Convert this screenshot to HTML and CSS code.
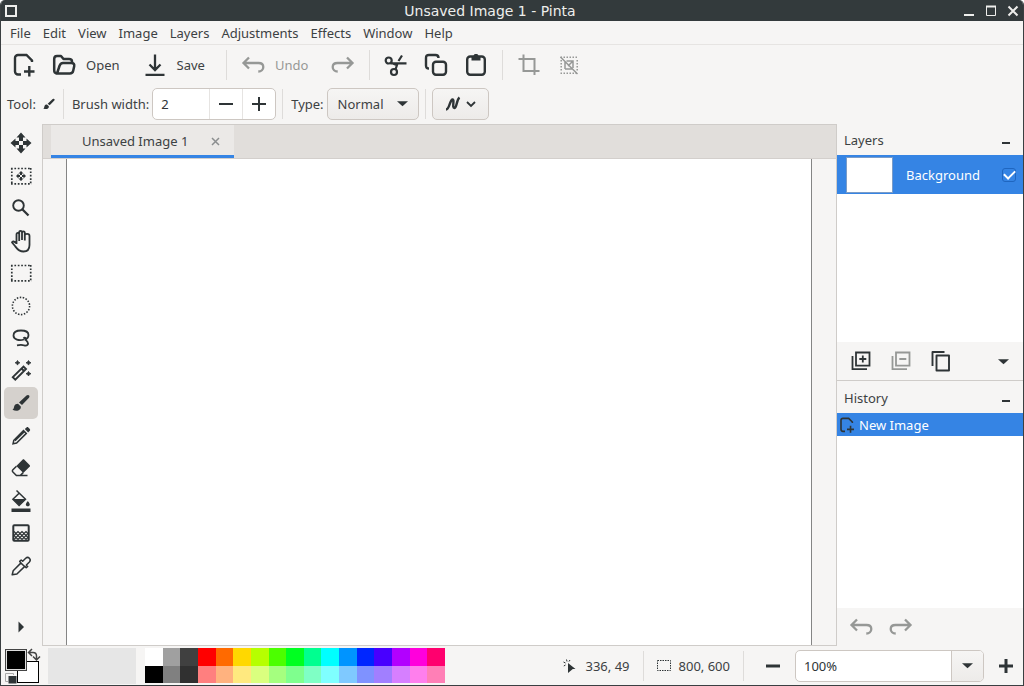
FILE: index.html
```
<!DOCTYPE html>
<html lang="en">
<head>
    <meta charset="utf-8">
    <title>Unsaved Image 1 - Pinta</title>
    <link rel="stylesheet" href="styles.css">
</head>
<body>
    <!-- shared icons -->
    <svg class="defs" aria-hidden="true">
        <symbol id="i-new" viewBox="0 0 24 24"><path d="M9 21.500H6a3 3 0 0 1-3-3V5a3 3 0 0 1 3-3h8.500l5.500 5.500V9M12 18.500h10.500M17.300 13v10.500" fill="none" stroke="currentColor" stroke-width="2.400"/></symbol>
        <symbol id="i-open" viewBox="0 0 24 24"><path d="M4.500 20.500C2.800 20 2.200 19 2.200 17.500V6c0-2 .8-3 2.800-3h4l2.500 3H17c2 0 3 .8 3 2.500V10M5 20.500l2.500-7.500c.6-2 1.500-3 3.500-3h8.500c2.200 0 3.100 1.200 2.700 3.200l-1 4.500c-.4 2-1.400 2.800-3.400 2.800H5z" fill="none" stroke="currentColor" stroke-width="2.500" stroke-linejoin="round"/></symbol>
        <symbol id="i-save" viewBox="0 0 24 24"><path d="M12 1.500V17M6.500 11.500L12 17l5.500-5.500M2.500 21.800h19" fill="none" stroke="currentColor" stroke-width="2.300"/></symbol>
        <symbol id="i-undo" viewBox="0 0 24 24"><path d="M8 4.500L2.500 10 8 15.500M3 10h14.500c3 0 4.800 1.500 4.800 4s-2 4.500-5 4.500" fill="none" stroke="currentColor" stroke-width="2.300"/></symbol>
        <symbol id="i-redo" viewBox="0 0 24 24"><path d="M16 4.500l5.500 5.500-5.500 5.500M21 10H6.500c-3 0-4.800 1.500-4.800 4s2 4.500 5 4.500" fill="none" stroke="currentColor" stroke-width="2.300"/></symbol>
        <symbol id="i-cut" viewBox="0 0 24 24"><g fill="none" stroke="currentColor" stroke-width="2.200"><circle cx="4.700" cy="7.500" r="3"/><circle cx="10" cy="19" r="3"/><path d="M6.500 10.300h16M11.500 16.500l2-6M14.500 8l3.500-5.500M6.500 9.500l6 2.500"/></g></symbol>
        <symbol id="i-copy" viewBox="0 0 24 24"><g fill="none" stroke="currentColor" stroke-width="2.400"><rect x="9" y="8.800" width="13" height="13" rx="3"/><path d="M5 15.500c-2 0-3-1-3-3V5c0-2 1-3 3-3h6.500c2 0 3 1 3 3"/></g></symbol>
        <symbol id="i-paste" viewBox="0 0 24 24"><rect x="3.200" y="3.500" width="17.600" height="18.300" rx="3" fill="none" stroke="currentColor" stroke-width="2.400"/><path d="M7.500 7.500V3.300h2C9.500 1.500 10.500 1 12 1s2.500.5 2.500 2.300h2v4.200z" fill="currentColor"/></symbol>
        <symbol id="i-crop" viewBox="0 0 24 24"><path d="M1.500 6h16v12M6.500 1.500V18h16M17.500 16v6" fill="none" stroke="currentColor" stroke-width="2"/></symbol>
        <symbol id="i-deselect" viewBox="0 0 24 24"><g fill="none" stroke="currentColor" stroke-width="1.500"><path d="M3.500 4.200H21M3.500 20.200H21" stroke-dasharray="1.500 1.500"/><path d="M4.200 7v12M20.200 7v12" stroke-dasharray="1.500 1.500"/><path d="M3.500 4l17 17M8 16V9M8 16h8M9.500 8H16v7M11 13l5-5"/></g></symbol>
        <symbol id="i-move" viewBox="0 0 24 24"><path d="M12 1.500l4.500 5H14V10h-4V6.500H7.500zM12 22.500l4.500-5H14V14h-4v3.500H7.500zM1.500 12l5-4.500V10H10v4H6.500v2.500zM22.500 12l-5-4.500V10H14v4h3.500v2.500z" fill="currentColor"/></symbol>
        <symbol id="i-movesel" viewBox="0 0 24 24"><path d="M2 4.500h20.500M2 19.800h20.500M2.800 4v16M21.700 4v16" fill="none" stroke="currentColor" stroke-width="1.700" stroke-dasharray="1.700 1.700"/><path d="M12 7l2.500 2.500H13V11h-2V9.500H9.500zM12 17l2.500-2.500H13V13h-2v1.500H9.500zM7 12l2.500-2.500V11H11v2H9.500v1.500zM17 12l-2.500-2.500V11H13v2h1.500v1.500z" fill="currentColor"/></symbol>
        <symbol id="i-zoom" viewBox="0 0 24 24"><circle cx="9.500" cy="9.500" r="5.300" fill="none" stroke="currentColor" stroke-width="1.900"/><path d="M13.500 13.500l6 6" stroke="currentColor" stroke-width="2.300"/></symbol>
        <symbol id="i-pan" viewBox="0 0 24 24"><path d="M7.500 15V5.500c0-2.300 2.700-2.300 2.700 0V12M10.200 11V3.500c0-2.300 2.800-2.300 2.800 0V11M13 11V4c0-2.300 2.800-2.300 2.800 0v7.500M15.800 11V6.500c0-2.300 4.700-2.200 4.700.5v9c0 4-1.500 6.500-6 6.500-5 0-7-3.500-8.500-5.500l-3-3.500c0-1.500 2.500-1.500 4.500 1" fill="none" stroke="currentColor" stroke-width="1.800" stroke-linejoin="round"/></symbol>
        <symbol id="i-rect" viewBox="0 0 24 24"><path d="M2 4.500h20.500M2 19.800h20.500M2.800 4v16M21.700 4v16" fill="none" stroke="currentColor" stroke-width="1.700" stroke-dasharray="1.700 1.700"/></symbol>
        <symbol id="i-ellipse" viewBox="0 0 24 24"><circle cx="12" cy="12" r="8.600" fill="none" stroke="currentColor" stroke-width="1.600" stroke-dasharray="1.500 1.500"/></symbol>
        <symbol id="i-lasso" viewBox="0 0 24 24"><path d="M15 13.500C10 15 4.500 13.500 4.500 9.500 4.500 6 8 4.500 12 4.500s7.500 1.500 7.500 4.500c0 2-1.500 4-4 4.800M14.500 12.500c1-1.500 3-.5 2 1l2 2.500c1.500 2.500-.5 4-3 3.500-2-.8-4.500-.8-7.500-.2" fill="none" stroke="currentColor" stroke-width="1.800"/></symbol>
        <symbol id="i-wand" viewBox="0 0 24 24"><path d="M3.800 18.200L14.500 7.500l2.500 2.500L6.300 20.700zM12.500 9.500l2.500 2.500" fill="none" stroke="currentColor" stroke-width="1.900"/><path d="M8.500 1.500l.8 1.500 1.600.8-1.600.8-.8 1.500-.8-1.500-1.600-.8 1.600-.8zM19.500 1.500l.9 1.500 1.600.8-1.600.8-.9 1.500-.9-1.500-1.600-.8 1.600-.8zM19.500 12.500l.9 1.400 1.600.8-1.600.8-.9 1.500-.9-1.500-1.600-.8 1.600-.8z" fill="currentColor" stroke="currentColor" stroke-width=".8"/></symbol>
        <symbol id="i-brush" viewBox="0 0 24 24"><path d="M17.500 4.500c1.800-1.500 4 .3 2.500 2.300L13 14l-3-2.500zM9 12.700l2.800 2.700c.5 3.600-3.800 5.600-8.300 3.300 1.500-.8 1.200-2 1.800-3.700.6-1.600 2-2.300 3.700-2.300z" fill="currentColor"/></symbol>
        <symbol id="i-pencil" viewBox="0 0 24 24"><path d="M4 19.800l.8-3.500L14.500 6.600l2.800 2.800-9.700 9.700zM6 16.800L15 8" fill="none" stroke="currentColor" stroke-width="1.500"/><path d="M15.800 5l1.700-1.600c.6-.5 1.200-.5 1.800 0l1.500 1.600c.5.6.5 1.200 0 1.800l-1.600 1.600z" fill="currentColor"/></symbol>
        <symbol id="i-eraser" viewBox="0 0 24 24"><path d="M13.500 3.700c.6-.6 1.300-.6 1.900 0l5.200 5.200c.6.600.6 1.300 0 1.900l-6.300 6.300-7-7z" fill="currentColor"/><path d="M7.500 10.200l-3.600 3.600c-.7.700-.7 1.500 0 2.200l3.500 3.600h3.800l3-3M10 19.600h8.500" fill="none" stroke="currentColor" stroke-width="1.500"/></symbol>
        <symbol id="i-bucket" viewBox="0 0 24 24"><path d="M7.500 1.500l9 8.700-6.400 6.300-6.200-6.300 6.700-6.400" fill="none" stroke="currentColor" stroke-width="1.500"/><path d="M4 10h12.500l-6.400 6.300zM18.800 12s2 2.300 2 3.500c0 2.400-4 2.400-4 0 0-1.200 2-3.500 2-3.500zM2.500 19.500h19V23h-19z" fill="currentColor"/></symbol>
        <symbol id="i-gradient" viewBox="0 0 24 24"><rect x="4.300" y="4.300" width="15.400" height="15.400" rx="1" fill="none" stroke="currentColor" stroke-width="2"/><path d="M5 10.500l2 2 2-2 2 2 2-2 2 2 2-2 2 2M5 14.500l2-2 2 2 2-2 2 2 2-2 2 2 2-2M5 14.500l2 2 2-2 2 2 2-2 2 2 2-2 2 2M5 18.500l2-2 2 2 2-2 2 2 2-2 2 2 2-2" fill="none" stroke="currentColor" stroke-width="1.200"/></symbol>
        <symbol id="i-picker" viewBox="0 0 24 24"><path d="M3.200 20.800l1-4 7.800-7.900-1.300-1.500 1.500-1.400 1.500 1.300 3-3c2.600-2.400 6 1.200 3.700 3.700l-3 3 1.300 1.400-1.500 1.400-1.400-1.400-7.900 7.600zM12 9l3.500 3.500" fill="none" stroke="currentColor" stroke-width="1.500" stroke-linejoin="round"/></symbol>
        <symbol id="i-right" viewBox="0 0 24 24"><path d="M9.500 6.500l5.500 5.500-5.500 5.500z" fill="currentColor"/></symbol>
        <symbol id="i-down" viewBox="0 0 12 12"><path d="M0 3.500h12L6 9z" fill="currentColor"/></symbol>
        <symbol id="i-layeradd" viewBox="0 0 24 24"><path d="M7 3.500h13.500v13.200H7zM3.500 7v13.200H18M13.800 6.500v7M10.300 10H17.300" fill="none" stroke="currentColor" stroke-width="1.800"/></symbol>
        <symbol id="i-layerdel" viewBox="0 0 24 24"><path d="M7 3.500h13.500v13.200H7zM3.500 7v13.200H18M10.300 10H17.300" fill="none" stroke="currentColor" stroke-width="1.800"/></symbol>
        <symbol id="i-layerdup" viewBox="0 0 24 24"><path d="M7.500 6.500h12.500v15H7.500zM3.500 17V3h12" fill="none" stroke="currentColor" stroke-width="1.900" stroke-linejoin="round"/></symbol>
        <symbol id="i-plus" viewBox="0 0 16 16"><path d="M1 8h14M8 1v14" stroke="currentColor"/></symbol>
        <symbol id="i-minus" viewBox="0 0 16 16"><path d="M1 8h14" stroke="currentColor"/></symbol>
    </svg>

    <div class="window">
        <header class="titlebar">
            <button class="win-btn" aria-label="Window menu"><svg width="12" height="12"><rect x="1" y="1" width="10" height="10" fill="none" stroke="currentColor" stroke-width="2"/></svg></button>
            <h1 class="title">Unsaved Image 1 - Pinta</h1>
            <div class="win-controls">
                <button class="win-btn" aria-label="Minimize"><svg width="12" height="12"><path d="M1 10h10" stroke="currentColor" stroke-width="2"/></svg></button>
                <button class="win-btn" aria-label="Maximize"><svg width="12" height="12"><path d="M1.500 1v9.500h9V1" fill="none" stroke="currentColor"/><path d="M1 1.500h10" stroke="currentColor" stroke-width="2"/></svg></button>
                <button class="win-btn" aria-label="Close"><svg width="12" height="12"><path d="M1.500 1.500l9 9M10.500 1.500l-9 9" stroke="currentColor" stroke-width="2"/></svg></button>
            </div>
        </header>

        <nav class="menubar">
            <button>File</button>
            <button>Edit</button>
            <button>View</button>
            <button>Image</button>
            <button>Layers</button>
            <button>Adjustments</button>
            <button>Effects</button>
            <button>Window</button>
            <button>Help</button>
        </nav>

        <div class="toolbar">
            <button class="tb-btn" aria-label="New"><svg class="icon"><use href="#i-new"/></svg></button>
            <button class="tb-btn labelled"><svg class="icon"><use href="#i-open"/></svg>Open</button>
            <button class="tb-btn labelled"><svg class="icon"><use href="#i-save"/></svg>Save</button>
            <span class="sep"></span>
            <button class="tb-btn labelled" disabled><svg class="icon"><use href="#i-undo"/></svg>Undo</button>
            <button class="tb-btn" aria-label="Redo" disabled><svg class="icon"><use href="#i-redo"/></svg></button>
            <span class="sep"></span>
            <button class="tb-btn" aria-label="Cut"><svg class="icon"><use href="#i-cut"/></svg></button>
            <button class="tb-btn" aria-label="Copy"><svg class="icon"><use href="#i-copy"/></svg></button>
            <button class="tb-btn" aria-label="Paste"><svg class="icon"><use href="#i-paste"/></svg></button>
            <span class="sep"></span>
            <button class="tb-btn" aria-label="Crop to selection" disabled><svg class="icon"><use href="#i-crop"/></svg></button>
            <button class="tb-btn" aria-label="Deselect" disabled><svg class="icon"><use href="#i-deselect"/></svg></button>
        </div>

        <div class="options">
            <span class="tool-label">Tool:</span>
            <svg class="icon-small"><use href="#i-brush"/></svg>
            <span class="sep"></span>
            <label for="brush-width">Brush width:</label>
            <div class="spin">
                <input type="text" id="brush-width" value="2">
                <button aria-label="Decrease"><svg><use href="#i-minus"/></svg></button>
                <button aria-label="Increase"><svg><use href="#i-plus"/></svg></button>
            </div>
            <span class="sep"></span>
            <label for="brush-type">Type:</label>
            <div class="combo">
                <select id="brush-type">
                    <option>Normal</option>
                    <option>Circles</option>
                    <option>Grid</option>
                    <option>Splatter</option>
                    <option>Squares</option>
                </select>
                <svg class="arrow"><use href="#i-down"/></svg>
            </div>
            <span class="sep"></span>
            <button class="line-btn" aria-label="Antialiasing">
                <svg width="18" height="18" viewBox="0 0 18 18"><path d="M2 14.500c3.500 0 3.500-9 6.500-10 2.500 0-1 8.500 2 8.500 2.500-.5 2-8.500 5-10.500" fill="none" stroke="currentColor" stroke-width="2.400"/></svg>
                <svg width="10" height="10" viewBox="0 0 10 10"><path d="M1 3l4 4 4-4" fill="none" stroke="currentColor" stroke-width="1.800"/></svg>
            </button>
        </div>

        <main class="main">
            <div class="toolbox">
                <div class="tools">
                    <button aria-label="Move selected"><svg class="icon"><use href="#i-move"/></svg></button>
                    <button aria-label="Move selection"><svg class="icon"><use href="#i-movesel"/></svg></button>
                    <button aria-label="Zoom"><svg class="icon"><use href="#i-zoom"/></svg></button>
                    <button aria-label="Pan"><svg class="icon"><use href="#i-pan"/></svg></button>
                    <button aria-label="Rectangle select"><svg class="icon"><use href="#i-rect"/></svg></button>
                    <button aria-label="Ellipse select"><svg class="icon"><use href="#i-ellipse"/></svg></button>
                    <button aria-label="Lasso select"><svg class="icon"><use href="#i-lasso"/></svg></button>
                    <button aria-label="Magic wand"><svg class="icon"><use href="#i-wand"/></svg></button>
                    <button aria-label="Paintbrush" class="active"><svg class="icon"><use href="#i-brush"/></svg></button>
                    <button aria-label="Pencil"><svg class="icon"><use href="#i-pencil"/></svg></button>
                    <button aria-label="Eraser"><svg class="icon"><use href="#i-eraser"/></svg></button>
                    <button aria-label="Paint bucket"><svg class="icon"><use href="#i-bucket"/></svg></button>
                    <button aria-label="Gradient"><svg class="icon"><use href="#i-gradient"/></svg></button>
                    <button aria-label="Color picker"><svg class="icon"><use href="#i-picker"/></svg></button>
                </div>
                <button class="more" aria-label="More tools"><svg class="icon"><use href="#i-right"/></svg></button>
            </div>

            <section class="document">
                <div class="tabs">
                    <div class="tab">
                        <span class="tab-title">Unsaved Image 1</span>
                        <button class="tab-close" aria-label="Close tab"><svg width="9" height="9"><path d="M1 1l7 7M8 1L1 8" stroke="currentColor" stroke-width="1.500"/></svg></button>
                    </div>
                </div>
                <div class="workspace">
                    <div class="canvas"></div>
                </div>
            </section>

            <aside class="dock">
                <section class="panel layers">
                    <div class="panel-head"><h2>Layers</h2><button class="fold" aria-label="Minimize layers"></button></div>
                    <div class="panel-list">
                        <div class="layer">
                            <span class="thumb"></span>
                            <label for="layer-visible">Background</label>
                            <input type="checkbox" id="layer-visible" checked>
                        </div>
                    </div>
                    <div class="panel-tools">
                        <button aria-label="Add layer"><svg class="icon"><use href="#i-layeradd"/></svg></button>
                        <button aria-label="Delete layer" disabled><svg class="icon"><use href="#i-layerdel"/></svg></button>
                        <button aria-label="Duplicate layer"><svg class="icon"><use href="#i-layerdup"/></svg></button>
                        <button class="overflow" aria-label="More"><svg class="arrow"><use href="#i-down"/></svg></button>
                    </div>
                </section>
                <section class="panel history">
                    <div class="panel-head"><h2>History</h2><button class="fold" aria-label="Minimize history"></button></div>
                    <div class="panel-list">
                        <div class="history-item"><svg><use href="#i-new"/></svg>New Image</div>
                    </div>
                    <div class="panel-tools">
                        <button aria-label="Undo" disabled><svg class="icon"><use href="#i-undo"/></svg></button>
                        <button aria-label="Redo" disabled><svg class="icon"><use href="#i-redo"/></svg></button>
                    </div>
                </section>
            </aside>
        </main>

        <footer class="statusbar">
            <button class="colors" aria-label="Primary and secondary color">
                <svg width="38" height="36" viewBox="0 0 38 36">
                    <rect x="12.500" y="13.500" width="21" height="21" fill="#fff" stroke="#000"/>
                    <rect x=".5" y="1.500" width="21" height="21" fill="#000" stroke="#444"/>
                    <rect x="1.500" y="2.500" width="19" height="19" fill="#000" stroke="#ddd"/>
                    <path d="M27 1l-3.500 3.500L27 8M24 4.500h4c2 0 3.500 1 3.500 3.500v4M28 8.500l3.500 3.500L35 8.500" fill="none" stroke="#444" stroke-width="1.500"/>
                    <path d="M3 33.500H.5v-8h8V27" fill="none" stroke="#aaa"/>
                    <rect x="3.500" y="28" width="8" height="7.500" fill="#2e3436"/>
                </svg>
            </button>
            <div class="recent"></div>
            <div class="palette" id="palette"></div>
            <div class="status-right">
                <div class="readout position">
                    <svg width="14" height="14" viewBox="0 0 14 14"><path d="M5 4l7.500 6H9.800L5 14z" fill="currentColor"/><path d="M4 2.500L3.500.5M2.500 4L.5 3M2.500 6L.8 7M6 2.500l1-1.500" stroke="currentColor"/></svg>
                    336, 49
                </div>
                <span class="sep"></span>
                <div class="readout selection">
                    <svg width="14" height="14" viewBox="0 0 14 14"><path d="M.5 1.500h13v10H.5z" fill="none" stroke="currentColor" stroke-dasharray="1.500 1"/></svg>
                    800, 600
                </div>
                <span class="sep"></span>
                <button class="zoom-btn" aria-label="Zoom out"><svg><use href="#i-minus"/></svg></button>
                <div class="zoom">
                    <input type="text" value="100%" aria-label="Zoom level">
                    <button aria-label="Zoom levels"><svg class="arrow"><use href="#i-down"/></svg></button>
                </div>
                <button class="zoom-btn" aria-label="Zoom in"><svg><use href="#i-plus"/></svg></button>
            </div>
        </footer>
    </div>

    <script>
        const colors = [
            '#ffffff', '#a0a0a0', '#404040', '#ff0000', '#ff6a00', '#ffd800', '#b6ff00', '#4cff00', '#00ff21',
            '#00ff90', '#00ffff', '#0094ff', '#0026ff', '#4800ff', '#b200ff', '#ff00dc', '#ff006e',
            '#000000', '#808080', '#303030', '#ff7f7f', '#ffb27f', '#ffe97f', '#daff7f', '#a5ff7f', '#7fff8e',
            '#7fffc5', '#7fffff', '#7fc9ff', '#7f92ff', '#a17fff', '#d67fff', '#ff7fed', '#ff7fb6'
        ];
        const palette = document.getElementById('palette');

        colors.forEach(color => {
            const swatch = document.createElement('button');
            swatch.style.background = color;
            swatch.setAttribute('aria-label', color);
            palette.appendChild(swatch);
        });
    </script>
</body>
</html>
```
FILE: styles.css
```
* {
    box-sizing: border-box;
}
body {
    margin: 0;
    background: #fff;
    color: #3c4143;
    font-family: "Noto Sans", sans-serif;
    font-size: 13px;
}
button,
input,
select {
    margin: 0;
    padding: 0;
    border: none;
    background: none;
    color: inherit;
    font: inherit;
}
h1,
h2 {
    margin: 0;
    font-size: 13px;
    font-weight: normal;
}
.defs {
    display: none;
}
svg {
    display: block;
    flex: none;
}
.icon {
    width: 24px;
    height: 24px;
    color: #2e3436;
}
.arrow {
    width: 11px;
    height: 11px;
    color: #2e3436;
}
.window {
    display: flex;
    flex-direction: column;
    height: 100vh;
    border: 1px solid #3a3f41;
    border-top: none;
    border-radius: 5px 5px 0 0;
    background: #f6f5f4;
    overflow: hidden;
}

/* title bar */
.titlebar {
    display: flex;
    align-items: center;
    height: 21px;
    padding: 0 4px;
    background: #333a3c;
    color: #eeeeec;
}
.title {
    flex: 1;
    font-family: "DejaVu Sans", sans-serif;
    font-size: 14px;
    line-height: 20px;
    text-align: center;
}
.win-controls {
    display: flex;
    gap: 10px;
}

/* menus */
.menubar {
    display: flex;
    height: 24px;
    padding-left: 3px;
    border-bottom: 1px solid #e6e4e2;
}
.menubar button {
    padding: 0 6px;
    line-height: 22px;
}

/* toolbars */
.toolbar {
    display: flex;
    align-items: center;
    height: 40px;
    padding-left: 3px;
}
.tb-btn {
    display: flex;
    align-items: center;
    gap: 10px;
    padding: 6px 8px;
}
.tb-btn.labelled {
    padding-right: 15px;
}
.sep {
    width: 1px;
    height: 30px;
    margin: 0 6px;
    background: #dedcda;
}
button:disabled,
button:disabled .icon {
    color: #969896;
}
.options {
    display: flex;
    align-items: center;
    height: 39px;
    padding: 0 6px 2px;
}
.icon-small {
    width: 16px;
    height: 16px;
    margin-left: 5px;
    color: #2e3436;
}
.options label {
    margin: 0 3px 0 2px;
}
.spin {
    display: flex;
    height: 32px;
    width: 124px;
    border: 1px solid #cdc7c2;
    border-radius: 5px;
    background: #fff;
    color: #2e3436;
}
.spin input {
    flex: 1;
    min-width: 0;
    padding-left: 8px;
}
.spin button {
    display: grid;
    place-items: center;
    width: 33px;
    border-left: 1px solid #e6e4e2;
}
.spin svg {
    width: 16px;
    height: 16px;
    stroke-width: 2px;
}
.combo {
    display: grid;
    align-items: center;
    width: 92px;
    height: 32px;
}
.combo select {
    grid-area: 1 / 1;
    height: 32px;
    padding-left: 10px;
    appearance: none;
}
.combo svg {
    grid-area: 1 / 1;
    justify-self: end;
    margin-right: 11px;
    pointer-events: none;
}
.combo select,
.line-btn {
    border: 1px solid #cdc7c2;
    border-radius: 5px;
    background: linear-gradient(#f6f5f4, #edebe9);
}
.line-btn {
    display: flex;
    align-items: center;
    justify-content: center;
    gap: 4px;
    width: 57px;
    height: 32px;
    color: #2e3436;
}

/* toolbox */
.main {
    display: flex;
    flex: 1;
    min-height: 0;
}
.toolbox {
    display: flex;
    flex-direction: column;
    width: 41px;
    padding: 3px 0 3px 3px;
}
.tools {
    display: flex;
    flex: 1;
    flex-direction: column;
    justify-content: space-between;
}
.toolbox button {
    display: grid;
    place-items: center;
    width: 34px;
    height: 32px;
    border-radius: 5px;
}
.toolbox .active {
    background: #d5d1cd;
}
.toolbox .more {
    margin-top: 29px;
}

/* document */
.document {
    display: flex;
    flex: 1;
    flex-direction: column;
    border: 1px solid #cfccc9;
}
.tabs {
    display: flex;
    height: 34px;
    padding-left: 8px;
    border-bottom: 1px solid #d3cfcc;
    background: #e1dedb;
}
.tab {
    display: flex;
    align-items: center;
    width: 183px;
    padding: 2px 13px 0 31px;
    border-bottom: 3px solid #3584e4;
    background: #ebe9e7;
}
.tab-title {
    flex: 1;
}
.tab-close {
    color: #8b8e8f;
    padding-right: 1px;
}
.workspace {
    flex: 1;
    padding: 0 24px 0 23px;
}
.canvas {
    height: 100%;
    border: solid #858585;
    border-width: 0 1px;
    background: #fff;
}

/* dock */
.dock {
    display: flex;
    flex-direction: column;
    width: 186px;
}
.panel {
    display: flex;
    flex-direction: column;
}
.layers {
    height: 257px;
    border-bottom: 1px solid #cfccc9;
}
.history {
    flex: 1;
    padding-top: 1px;
}
.panel-head {
    display: flex;
    align-items: center;
    justify-content: space-between;
    height: 31px;
    padding: 0 13px 0 7px;
}
.fold {
    width: 8px;
    height: 2px;
    margin-top: 6px;
    background: #2e3436;
}
.panel-list {
    flex: 1;
    background: #fff;
}
.layer {
    display: flex;
    align-items: center;
    height: 39px;
    padding: 0 7px 0 9px;
    background: #3584e4;
    color: #fff;
}
.thumb {
    width: 47px;
    height: 36px;
    border: 1px solid #7a9cc8;
    background: #fff;
}
.layer label {
    flex: 1;
    padding-left: 13px;
}
.layer input {
    display: grid;
    place-items: center;
    width: 14px;
    height: 14px;
    border: 1px solid #1f66c0;
    border-radius: 3px;
    appearance: none;
}
.layer input:checked::before {
    width: 9px;
    height: 5px;
    margin-bottom: 3px;
    border: solid #fff;
    border-width: 0 0 2px 2px;
    content: "";
    transform: rotate(-45deg);
}
.panel-tools {
    display: flex;
    align-items: center;
    height: 38px;
    padding: 0 14px 0 12px;
    gap: 16px;
}
.overflow {
    margin-left: auto;
}
.history-item {
    display: flex;
    align-items: center;
    gap: 4px;
    height: 23px;
    padding-left: 2px;
    background: #3584e4;
    color: #fff;
}
.history-item svg {
    width: 16px;
    height: 16px;
    color: #2e3436;
}

/* status bar */
.statusbar {
    display: flex;
    align-items: center;
    height: 39px;
    padding: 0 9px 0 4px;
}
.recent {
    width: 88px;
    height: 36px;
    margin: 0 9px 0 5px;
    background: #e6e6e6;
}
.palette {
    display: grid;
    grid-template-columns: repeat(17, 1fr);
    grid-template-rows: 1fr 1fr;
    width: 300px;
    height: 35px;
}
.status-right {
    display: flex;
    align-items: center;
    margin-left: auto;
}
.readout {
    display: flex;
    align-items: center;
    gap: 8px;
}
.readout svg {
    color: #2e3436;
}
.status-right .sep {
    margin: 0 13px;
}
.zoom-btn {
    display: grid;
    place-items: center;
    width: 16px;
    height: 30px;
    color: #2e3436;
}
.zoom-btn svg {
    width: 16px;
    height: 16px;
    stroke-width: 3px;
}
.status-right .sep + .zoom-btn {
    margin-left: 8px;
}
.zoom {
    display: flex;
    width: 189px;
    height: 32px;
    margin: 0 14px;
    border: 1px solid #cdc7c2;
    border-radius: 5px;
    background: #fff;
    color: #2e3436;
    overflow: hidden;
}
.zoom input {
    flex: 1;
    min-width: 0;
    padding-left: 8px;
}
.zoom button {
    display: grid;
    place-items: center;
    width: 32px;
    border-left: 1px solid #cdc7c2;
    background: linear-gradient(#f6f5f4, #edebe9);
}
```
